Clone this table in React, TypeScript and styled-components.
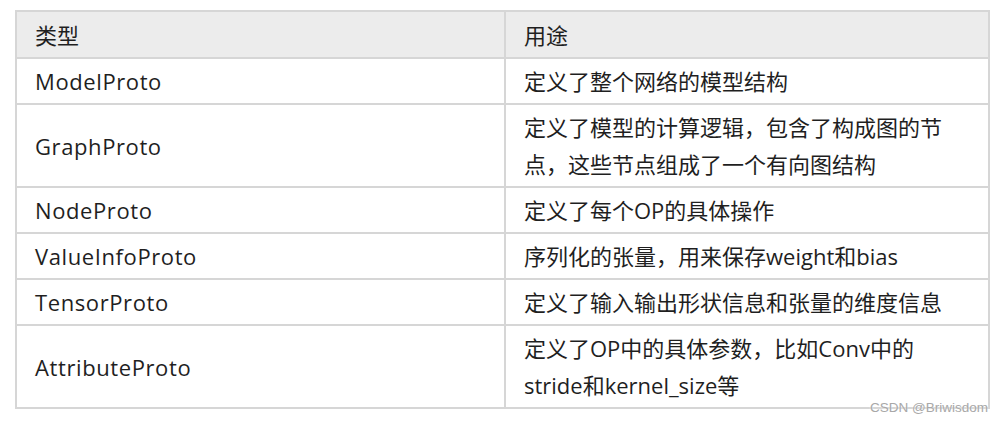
import React from "react";
import styled, { createGlobalStyle } from "styled-components";

const GlobalStyle = createGlobalStyle`
  html, body {
    margin: 0;
    padding: 0;
    background: #ffffff;
  }
  body {
    font-family: "Open Sans", "Noto Sans CJK SC", sans-serif;
    color: #1f1f1f;
  }
`;

const Page = styled.div`
  position: relative;
  width: 1008px;
  height: 422px;
  padding: 10px 0 0 15px;
  box-sizing: border-box;
`;

const Table = styled.table`
  width: 975px;
  border-collapse: collapse;
  table-layout: fixed;
  font-size: 22px;
  line-height: 37px;
`;

const HeadCell = styled.th`
  text-align: left;
  font-weight: 400;
  background: #ececec;
  border: 2px solid #d6d6d6;
  padding: 5px 18px 3px;
  vertical-align: middle;
`;

const Cell = styled.td<{ $name?: boolean }>`
  border: 2px solid #d6d6d6;
  padding: 4px 18px 3px;
  vertical-align: middle;
  letter-spacing: ${(p) => (p.$name ? "0.6px" : "0")};
`;

const Watermark = styled.span`
  position: absolute;
  right: 20px;
  bottom: 7px;
  font-family: "Liberation Sans", "Noto Sans CJK SC", sans-serif;
  font-size: 13.5px;
  color: #a8a8a8;
  text-shadow: 0 0 2px #ffffff;
`;

const rows: [string, string][] = [
  ["ModelProto", "定义了整个网络的模型结构"],
  ["GraphProto", "定义了模型的计算逻辑，包含了构成图的节点，这些节点组成了一个有向图结构"],
  ["NodeProto", "定义了每个OP的具体操作"],
  ["ValueInfoProto", "序列化的张量，用来保存weight和bias"],
  ["TensorProto", "定义了输入输出形状信息和张量的维度信息"],
  ["AttributeProto", "定义了OP中的具体参数，比如Conv中的stride和kernel_size等"],
];

const App: React.FC = () => {
  return (
    <>
      <GlobalStyle />
      <Page>
        <Table>
          <colgroup>
            <col style={{ width: "489px" }} />
            <col />
          </colgroup>
          <thead>
            <tr>
              <HeadCell>类型</HeadCell>
              <HeadCell>用途</HeadCell>
            </tr>
          </thead>
          <tbody>
            {rows.map(([type, use]) => (
              <tr key={type}>
                <Cell $name>{type}</Cell>
                <Cell>{use}</Cell>
              </tr>
            ))}
          </tbody>
        </Table>
        <Watermark>CSDN @Briwisdom</Watermark>
      </Page>
    </>
  );
};

export default App;
